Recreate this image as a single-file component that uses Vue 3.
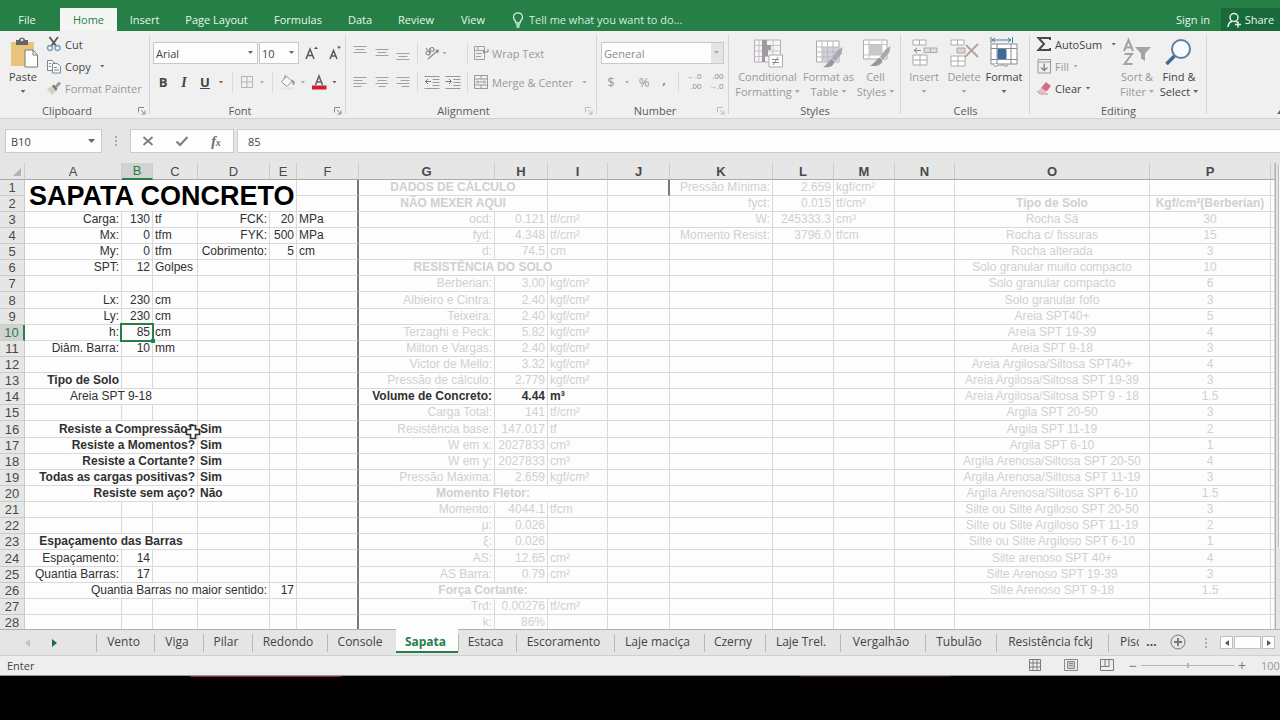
<script setup>
import { ref } from 'vue'

const ribbonTabs = [
  ['File', 54], ['Home', 57], ['Insert', 55], ['Page Layout', 89], ['Formulas', 74],
  ['Data', 50], ['Review', 62], ['View', 52],
]

const columns = [
  ['A', 97], ['B', 31], ['C', 45], ['D', 72], ['E', 27], ['F', 62], ['G', 136], ['H', 53],
  ['I', 60], ['J', 62], ['K', 103], ['L', 61], ['M', 61], ['N', 60], ['O', 195], ['P', 121], ['', 4],
]
const letters = columns.map((c) => c[0])

const cells = {
  A1: ['SAPATA CONCRETO', 5, 'title'],
  A3: ['Carga:'], B3: ['130'], C3: ['tf'], D3: ['FCK:'], E3: ['20'], F3: ['MPa'],
  A4: ['Mx:'], B4: ['0'], C4: ['tfm'], D4: ['FYK:'], E4: ['500'], F4: ['MPa'],
  A5: ['My:'], B5: ['0'], C5: ['tfm'], D5: ['Cobrimento:'], E5: ['5'], F5: ['cm'],
  A6: ['SPT:'], B6: ['12'], C6: ['Golpes'],
  A8: ['Lx:'], B8: ['230'], C8: ['cm'],
  A9: ['Ly:'], B9: ['230'], C9: ['cm'],
  A10: ['h:'], B10: ['85', 1, 'active'], C10: ['cm'],
  A11: ['Diâm. Barra:'], B11: ['10'], C11: ['mm'],
  A13: ['Tipo de Solo', 1, 'bold'],
  A14: ['Areia SPT 9-18', 3, 'mid'],
  A16: ['Resiste a Compressão?', 3, 'bold'], D16: ['Sim', 1, 'bold start'],
  A17: ['Resiste a Momentos?', 3, 'bold'], D17: ['Sim', 1, 'bold start'],
  A18: ['Resiste a Cortante?', 3, 'bold'], D18: ['Sim', 1, 'bold start'],
  A19: ['Todas as cargas positivas?', 3, 'bold'], D19: ['Sim', 1, 'bold start'],
  A20: ['Resiste sem aço?', 3, 'bold'], D20: ['Não', 1, 'bold start'],
  A23: ['Espaçamento das Barras', 3, 'bold mid'],
  A24: ['Espaçamento:'], B24: ['14'],
  A25: ['Quantia Barras:'], B25: ['17'],
  A26: ['Quantia Barras no maior sentido:', 4], E26: ['17'],
  G1: ['DADOS DE CÁLCULO', 2, 'bold mid'],
  G2: ['NÃO MEXER AQUI', 2, 'bold mid'],
  G6: ['RESISTÊNCIA DO SOLO', 3, 'bold mid'],
  G14: ['Volume de Concreto:', 1, 'bold dark'], H14: ['4.44', 1, 'bold dark'], I14: ['m³', 1, 'bold dark'],
  G20: ['Momento Fletor:', 3, 'bold mid'],
  G26: ['Força Cortante:', 3, 'bold mid'],
  O2: ['Tipo de Solo', 1, 'bold'], P2: ['Kgf/cm²(Berberian)', 1, 'bold'],
}

const results = {
  3: ['ocd:', '0.121', 'tf/cm²'], 4: ['fyd:', '4.348', 'tf/cm²'], 5: ['d:', '74.5', 'cm'],
  7: ['Berberian:', '3.00', 'kgf/cm²'], 8: ['Albieiro e Cintra:', '2.40', 'kgf/cm²'],
  9: ['Teixeira:', '2.40', 'kgf/cm²'], 10: ['Terzaghi e Peck:', '5.82', 'kgf/cm²'],
  11: ['Milton e Vargas:', '2.40', 'kgf/cm²'], 12: ['Victor de Mello:', '3.32', 'kgf/cm²'],
  13: ['Pressão de cálculo:', '2.779', 'kgf/cm²'], 15: ['Carga Total:', '141', 'tf/cm²'],
  16: ['Resistência base:', '147.017', 'tf'], 17: ['W em x:', '2027833', 'cm³'],
  18: ['W em y:', '2027833', 'cm³'], 19: ['Pressão Máxima:', '2.659', 'kgf/cm²'],
  21: ['Momento:', '4044.1', 'tfcm'], 22: ['μ:', '0.026', ''], 23: ['ξ:', '0.026', ''],
  24: ['AS:', '12.65', 'cm²'], 25: ['AS Barra:', '0.79', 'cm²'],
  27: ['Trd:', '0.00276', 'tf/cm²'], 28: ['k:', '86%', ''],
}
for (const [r, [g, h, i]] of Object.entries(results)) {
  cells['G' + r] = [g]
  cells['H' + r] = [h]
  cells['I' + r] = [i]
}

const extra = [
  ['Pressão Mínima:', '2.659', 'kgf/cm²'], ['fyct:', '0.015', 'tf/cm²'],
  ['W:', '245333.3', 'cm³'], ['Momento Resist:', '3796.0', 'tfcm'],
]
extra.forEach(([k, l, m], i) => {
  cells['K' + (i + 1)] = [k]
  cells['L' + (i + 1)] = [l]
  cells['M' + (i + 1)] = [m]
})

const soils = [
  ['Rocha Sã', '30'], ['Rocha c/ fissuras', '15'], ['Rocha alterada', '3'],
  ['Solo granular muito compacto', '10'], ['Solo granular compacto', '6'], ['Solo granular fofo', '3'],
  ['Areia SPT40+', '5'], ['Areia SPT 19-39', '4'], ['Areia SPT 9-18', '3'],
  ['Areia Argilosa/Siltosa SPT40+', '4'], ['Areia Argilosa/Siltosa SPT 19-39', '3'],
  ['Areia Argilosa/Siltosa SPT 9 - 18', '1.5'], ['Argila SPT 20-50', '3'], ['Argila SPT 11-19', '2'],
  ['Argila SPT 6-10', '1'], ['Argila Arenosa/Siltosa SPT 20-50', '4'],
  ['Argila Arenosa/Siltosa SPT 11-19', '3'], ['Argila Arenosa/Siltosa SPT 6-10', '1.5'],
  ['Silte ou Silte Argiloso SPT 20-50', '3'], ['Silte ou Silte Argiloso SPT 11-19', '2'],
  ['Silte ou Silte Argiloso SPT 6-10', '1'], ['Silte arenoso SPT 40+', '4'],
  ['Silte Arenoso SPT 19-39', '3'], ['Silte Arenoso SPT 9-18', '1.5'],
]
soils.forEach(([o, p], i) => {
  cells['O' + (i + 3)] = [o]
  cells['P' + (i + 3)] = [p]
})

const rows = Array.from({ length: 28 }, (_, i) => {
  const n = i + 1
  const list = []
  let c = n === 2 ? 5 : 0
  while (c < letters.length) {
    const letter = letters[c]
    const [text = '', span = 1, cls = ''] = cells[letter + n] || []
    list.push({ key: letter + n, text, span, rowspan: cls === 'title' ? 2 : 1, cls: ['col-' + (letter || 'end'), cls] })
    c += span
  }
  return { n, list }
})

const sheets = [
  ['Vento', 58], ['Viga', 49], ['Pilar', 49], ['Redondo', 75], ['Console', 69], ['Sapata', 62],
  ['Estaca', 58], ['Escoramento', 98], ['Laje maciça', 90], ['Czerny', 61], ['Laje Trel.', 75],
  ['Vergalhão', 85], ['Tubulão', 71], ['Resistência fckj', 112],
]

const fontName = ref('Arial')
const fontSize = ref('10')
const numberFormat = ref('General')
const nameBox = ref('B10')
const formula = ref('85')
</script>

<template>
  <div class="excel">
    <header class="top">
      <nav class="tabs" aria-label="Ribbon">
        <button v-for="[t, w] in ribbonTabs" :key="t" class="tab" :class="{ on: t === 'Home', file: t === 'File' }" :style="{ width: w + 'px' }">{{ t }}</button>
      </nav>
      <label class="tell">
        <svg width="12" height="16" viewBox="0 0 12 16" fill="none" stroke="#d7f0df" stroke-width="1.3"><path d="M4 11 C4 8.500 1.500 8 1.500 5.200 A4.500 4.400 0 0 1 10.500 5.200 C10.500 8 8 8.500 8 11 Z M4 13 H8 M4.500 15 H7.500" /></svg>
        <input aria-label="Tell me what you want to do" placeholder="Tell me what you want to do..." />
      </label>
      <button class="sign">Sign in</button>
      <button class="share">
        <svg width="15" height="16" viewBox="0 0 15 16" fill="none" stroke="#dff5e6" stroke-width="1.5"><circle cx="7" cy="5.500" r="4" /><path d="M1 15 C1.300 11.500 3 9.800 5 9.200 M9 9.200 L11 11 M11 9.500 V15.500 M8 12.500 H14" /></svg>
        Share
      </button>
    </header>

    <section class="ribbon">
      <div class="group clipboard">
        <div class="body">
          <button class="big paste">
            <svg width="30" height="32" viewBox="0 0 30 32"><path d="M3 5 H26 V29 H3 Z" fill="#e8c47c" /><path d="M8 3 H11 C11 -0.500 17 -0.500 17 3 H20 V8 H8 Z" fill="#666" /><circle cx="14" cy="3" r="1.300" fill="#eee" /><path d="M17 13 H25 L29.500 18 V30 H17 Z" fill="#fff" stroke="#777" /><path d="M25 13 V18 H29" fill="none" stroke="#777" /></svg>
            <span>Paste</span><i class="caret"></i>
          </button>
          <div class="stack">
            <button class="small">
              <svg width="16" height="16" viewBox="0 0 16 16" fill="none"><path d="M3.500 1 L10.500 10.500 M12 1 L5 10.500" stroke="#555" stroke-width="1.800" /><circle cx="4" cy="12" r="2.500" stroke="#7c9ab8" stroke-width="1.300" /><circle cx="11.500" cy="12" r="2.500" stroke="#7c9ab8" stroke-width="1.300" /></svg>Cut
            </button>
            <button class="small">
              <svg width="16" height="16" viewBox="0 0 16 16" fill="#fafafa" stroke="#7b8792"><path d="M1.500 2.500 H6 L9.500 5.500 V12.500 H1.500 Z" /><path d="M6.500 5.500 H11.500 L14.500 8.500 V15 H6.500 Z M3 5.500 H5 M3 8.500 H5 M8 9.500 H11 M8 12 H13" /></svg>Copy<i class="caret gap"></i>
            </button>
            <button class="small off">
              <svg width="16" height="16" viewBox="0 0 16 16"><path d="M1 9 L6 6 L10 11 L6 15 Z" fill="#d5d0bd" /><path d="M6 6 L8 4.500 L11.500 9 L10 11 Z" fill="#777" /><path d="M9 6 L13 1.500 L15 3.500 L11 8 Z" fill="#999" /></svg>Format Painter
            </button>
          </div>
        </div>
        <footer><span>Clipboard</span><svg class="launch" viewBox="0 0 8 8"><path d="M.500 5.500 V.500 H6 M3 3 L6.500 6.500 M7 3.500 V7 H3.500" /></svg></footer>
      </div>

      <div class="group font">
        <div class="body lines">
          <div class="line row-a">
            <div class="pick"><select v-model="fontName" aria-label="Font"><option>Arial</option></select><i class="caret"></i></div>
            <div class="pick"><select v-model="fontSize" aria-label="Font size"><option>10</option></select><i class="caret"></i></div>
            <button aria-label="Increase font size"><svg width="14" height="16" viewBox="0 0 14 16" fill="none" stroke="#5a5a5a" stroke-width="1.500"><path d="M1 14 L5 4 L9 14 M2.500 10.500 H7.500" /><path d="M9 4 L11 1.500 L13 4 Z" fill="#5a5a5a" stroke="none" /></svg></button>
            <button aria-label="Decrease font size"><svg width="14" height="16" viewBox="0 0 14 16" fill="none" stroke="#5a5a5a" stroke-width="1.500"><path d="M2 14 L5.500 5.500 L9 14 M3 11 H8" /><path d="M9 1.500 L11 4 L13 1.500 Z" fill="#5a5a5a" stroke="none" /></svg></button>
          </div>
          <div class="line row-b">
            <button class="glyph"><b>B</b></button>
            <button class="glyph serif"><b><em>I</em></b></button>
            <button class="glyph"><b><u>U</u></b></button>
            <i class="caret"></i><i class="sep"></i>
            <button aria-label="Borders"><svg width="14" height="14" viewBox="0 0 14 14" fill="none" stroke="#b5b5b5"><path d="M1.500 1.500 H12.500 V12.500 H1.500 Z M7 1.500 V12.500 M1.500 7 H12.500" /></svg></button>
            <i class="caret pale"></i><i class="sep"></i>
            <button aria-label="Fill color"><svg width="16" height="16" viewBox="0 0 16 16" fill="#f7f7f7" stroke="#999"><path d="M6 2 L12 7 L7 12.500 L1.500 8 Z M5 5 V1" /><path d="M12 6 C15 7 14.500 10 13.500 11 Z" fill="#999" /><path d="M1 13.500 H14 V15.500 H1 Z" fill="#e4e4e4" stroke="none" /></svg></button>
            <i class="caret pale"></i>
            <button aria-label="Font color"><svg width="16" height="16" viewBox="0 0 16 16"><path d="M4.500 11 L8 2 L11.500 11 M5.500 8 H10.500" fill="none" stroke="#666" stroke-width="1.600" /><path d="M1 11.500 H15.500 V15.500 H1 Z" fill="#cf1f30" /></svg></button>
            <i class="caret"></i>
          </div>
        </div>
        <footer><span>Font</span><svg class="launch" viewBox="0 0 8 8"><path d="M.500 5.500 V.500 H6 M3 3 L6.500 6.500 M7 3.500 V7 H3.500" /></svg></footer>
      </div>

      <div class="group align">
        <div class="body lines">
          <div class="line row-c">
            <button aria-label="Top align"><svg width="14" height="16" viewBox="0 0 14 16" stroke="#a2a2a2"><path d="M.500 1.500 H13.500 M2.500 4.500 H11.500 M.500 7.500 H13.500" /></svg></button>
            <button aria-label="Middle align"><svg width="14" height="16" viewBox="0 0 14 16" stroke="#a2a2a2"><path d="M.500 4.500 H13.500 M2.500 7.500 H11.500 M.500 10.500 H13.500" /></svg></button>
            <button aria-label="Bottom align"><svg width="14" height="16" viewBox="0 0 14 16" stroke="#a2a2a2"><path d="M.500 8.500 H13.500 M2.500 11.500 H11.500 M.500 14.500 H13.500" /></svg></button>
            <i class="sep"></i>
            <button aria-label="Orientation"><svg width="16" height="16" viewBox="0 0 16 16" fill="none" stroke="#8b8b8b" stroke-width="1.200"><circle cx="4" cy="8" r="2" /><path d="M2 3 L6.500 9 M6 3 V8" /><circle cx="8" cy="4.500" r="2" /><path d="M4 14 L14.500 5 M14.500 5 L11.500 5.500 M14.500 5 L13.500 8" /></svg></button>
            <i class="caret pale lead"></i><i class="sep"></i>
            <button class="small off"><svg width="16" height="16" viewBox="0 0 16 16" fill="none" stroke="#a0a0a0"><path d="M1.500 1.500 H11.500 V14.500 H1.500 Z M1.500 5.500 H11.500 M3 8.500 H9 M3 11.500 H8 M5 1.500 V5" /><path d="M15 4 V7 H10 M12 5 L10 7 L12 9" stroke="#888" /></svg>Wrap Text</button>
          </div>
          <div class="line row-c">
            <button aria-label="Align left"><svg width="14" height="12" viewBox="0 0 14 12" stroke="#a2a2a2"><path d="M.500 1.500 H13.500 M.500 4.500 H9.500 M.500 7.500 H13.500 M.500 10.500 H8.500" /></svg></button>
            <button aria-label="Center"><svg width="14" height="12" viewBox="0 0 14 12" stroke="#a2a2a2"><path d="M.500 1.500 H13.500 M2.500 4.500 H11.500 M.500 7.500 H13.500 M3.500 10.500 H10.500" /></svg></button>
            <button aria-label="Align right"><svg width="14" height="12" viewBox="0 0 14 12" stroke="#a2a2a2"><path d="M.500 1.500 H13.500 M4.500 4.500 H13.500 M.500 7.500 H13.500 M5.500 10.500 H13.500" /></svg></button>
            <i class="sep"></i>
            <button aria-label="Decrease indent"><svg width="16" height="14" viewBox="0 0 16 14" fill="none" stroke="#999"><path d="M.500 1.500 H15.500 M8.500 4.500 H15.500 M8.500 7.500 H15.500 M8.500 10.500 H15.500 M.500 13.500 H15.500" /><path d="M7 6.500 H1.500 M4 4 L1.500 6.500 L4 9" stroke="#777" /></svg></button>
            <button aria-label="Increase indent"><svg width="16" height="14" viewBox="0 0 16 14" fill="none" stroke="#999"><path d="M.500 1.500 H15.500 M8.500 4.500 H15.500 M8.500 7.500 H15.500 M8.500 10.500 H15.500 M.500 13.500 H15.500" /><path d="M.500 6.500 H6 M4 4 L6.500 6.500 L4 9" stroke="#777" /></svg></button>
            <i class="sep"></i>
            <button class="small off"><svg width="16" height="16" viewBox="0 0 16 16" fill="none" stroke="#999"><path d="M1.500 1.500 H14.500 V14.500 H1.500 Z M1.500 5 H14.500 M1.500 11 H14.500 M8 1.500 V5 M8 11 V14.500 M3.500 8 H12.500 M5 6.500 L3.500 8 L5 9.500 M11 6.500 L12.500 8 L11 9.500" /></svg>Merge &amp; Center<i class="caret pale gap"></i></button>
          </div>
        </div>
        <footer><span>Alignment</span><svg class="launch pale" viewBox="0 0 8 8"><path d="M.500 5.500 V.500 H6 M3 3 L6.500 6.500 M7 3.500 V7 H3.500" /></svg></footer>
      </div>

      <div class="group number">
        <div class="body lines">
          <div class="line row-d"><div class="pick dim"><select v-model="numberFormat" aria-label="Number format"><option>General</option></select><i class="caret pale"></i></div></div>
          <div class="line row-e">
            <button class="glyph off">$</button><i class="caret pale"></i>
            <button class="glyph off">%</button><button class="glyph comma"><b>,</b></button>
            <i class="sep"></i>
            <button class="dec" aria-label="Increase decimal"><span>←.0</span><span>.00</span></button>
            <button class="dec" aria-label="Decrease decimal"><span>.00</span><span>→.0</span></button>
          </div>
        </div>
        <footer><span>Number</span><svg class="launch pale" viewBox="0 0 8 8"><path d="M.500 5.500 V.500 H6 M3 3 L6.500 6.500 M7 3.500 V7 H3.500" /></svg></footer>
      </div>

      <div class="group styles">
        <div class="body">
          <button class="big off">
            <svg width="32" height="32" viewBox="0 0 32 32"><path d="M2.500 3 H28.500 V25 H2.500 Z" fill="#f7f4f7" stroke="#b4b0b4" /><path d="M2.500 8.500 H28.500 M2.500 14 H28.500 M2.500 19.500 H28.500 M7 3 V25 M21 3 V25" stroke="#c6c2c6" /><path d="M10 3 H15 V8 H19 V13 H16 V19 H13 V25 H10 Z" fill="#9e9aa2" /><path d="M17 18 H30.500 V30 H17 Z" fill="#fff" stroke="#aaa" /><path d="M20 22.500 H27 M20 25.500 H27 M26 20 L21 28" stroke="#888" /></svg>
            <span>Conditional</span><span>Formatting<i class="caret pale"></i></span>
          </button>
          <button class="big off">
            <svg width="30" height="32" viewBox="0 0 30 32"><path d="M2.500 4 H25 V25 H2.500 Z" fill="#fff" stroke="#aaa" /><path d="M8 10 H25 V25 H8 Z" fill="#d2d0dc" /><path d="M2.500 10 H25 M2.500 15 H25 M2.500 20 H25 M8 4 V25 M13.500 4 V25 M19 4 V25" stroke="#bbb" /><path d="M28.500 10 L27.500 17 L21 24 L18 21 L23 14 Z" fill="#a8a8ae" /><path d="M17.500 22 L20.500 25 C19 30 14 31 9 30 C13 28.500 14 24 17.500 22 Z" fill="#98989f" /></svg>
            <span>Format as</span><span>Table<i class="caret pale"></i></span>
          </button>
          <button class="big off">
            <svg width="30" height="32" viewBox="0 0 30 32"><path d="M2.500 3 H26 V22 H2.500 Z" fill="#fff" stroke="#aaa" /><path d="M8 7 H21 V18 H8 Z" fill="#c7c7cc" /><path d="M2.500 7.500 H26 M2.500 18 H26 M8 3 V22 M21 3 V22" stroke="#c4c4c4" /><path d="M29.500 9 L28.500 15 L22 23 L19 20 L24 13 Z" fill="#a8a8ae" /><path d="M18.500 20.500 L21.500 24 C20 28.500 15 30 9 28.500 C13 27 15 22.500 18.500 20.500 Z" fill="#98989f" /></svg>
            <span>Cell</span><span>Styles<i class="caret pale"></i></span>
          </button>
        </div>
        <footer><span>Styles</span></footer>
      </div>

      <div class="group cells">
        <div class="body">
          <button class="big off">
            <svg width="28" height="32" viewBox="0 0 28 32" fill="#fff" stroke="#aaa"><path d="M3 3 H16 V8 H3 Z M9.500 3 V8 M3 18 H17 V28 H3 Z M10 18 V28 M3 23 H17" /><path d="M14 11 H27 V15.500 H14 Z M20.500 11 V15.500" fill="#ddd" /><path d="M11 13.500 H4 M7 11 L4 13.500 L7 16" fill="none" stroke="#888" /></svg>
            <span>Insert</span><i class="caret pale"></i>
          </button>
          <button class="big off">
            <svg width="30" height="32" viewBox="0 0 30 32" fill="#fff" stroke="#aaa"><path d="M2 3 H15 V8 H2 Z M8.500 3 V8 M2 19 H16 V29 H2 Z M9 19 V29 M2 24 H16" /><path d="M8 11 H16 V16 H8 Z" fill="#d5d5dc" /><path d="M17 8 L29 20 M29 7 L16 20" fill="none" stroke="#b5a49a" stroke-width="1.800" /></svg>
            <span>Delete</span><i class="caret pale"></i>
          </button>
          <button class="big">
            <svg width="30" height="32" viewBox="0 0 30 32" fill="#fff" stroke="#858c8c"><path d="M2 7 H28 V27 H2 Z M2 11.500 H28 M2 22.500 H28 M8 7 V27 M22 7 V27" /><path d="M9 12.500 H17 V21.500 H9 Z" fill="#3a6c99" stroke="#3a6c99" /><path d="M3 3 H22 M6 1 L3 3 L6 5 M19 1 L22 3 L19 5 M2 0 V6 M23.500 0 V6" fill="none" stroke="#4a7a96" /><path d="M4 27 Q6 31 9 28 H15 Q17 31 19 28" stroke="#858c8c" /></svg>
            <span>Format</span><i class="caret"></i>
          </button>
        </div>
        <footer><span>Cells</span></footer>
      </div>

      <div class="group editing">
        <div class="body">
          <div class="stack">
            <button class="small"><svg width="16" height="16" viewBox="0 0 16 16" fill="none" stroke="#4a4a4a" stroke-width="2"><path d="M14 4 V2 H2.500 L8 8 L2.500 14 H14 V12" /></svg>AutoSum<i class="caret gap"></i></button>
            <button class="small off"><svg width="16" height="16" viewBox="0 0 16 16" fill="none" stroke="#999"><path d="M2 1.500 H14.500 V15 H2 Z M2 4 H14.500" /><path d="M8.200 5.500 V12 M5 9.500 L8.200 12.500 L11.500 9.500" stroke="#7d8791" stroke-width="1.400" /></svg>Fill<i class="caret pale near"></i></button>
            <button class="small"><svg width="16" height="16" viewBox="0 0 16 16"><path d="M5 8 L10 2 L15 6 L10.500 11.500 Z" fill="#cf6f88" /><path d="M5 8 L10.500 11.500 L8.500 13.500 L3.500 13 L2 11 Z" fill="#e8bcc8" /><path d="M1 11 L4 14 H12" fill="none" stroke="#c0909c" /></svg>Clear<i class="caret near"></i></button>
          </div>
          <button class="big off">
            <svg width="30" height="32" viewBox="0 0 30 32" fill="none" stroke="#a3a3a3" stroke-width="2"><path d="M2 14 L6.500 3 L11 14 M3.500 10.500 H9.500 M2.500 17 H10 L2.500 27 H10.500" /><path d="M13 10 H29 L23 16.500 V24 L19 21.500 V16.500 Z" fill="#a3a3a3" stroke="none" /></svg>
            <span>Sort &amp;</span><span>Filter<i class="caret pale"></i></span>
          </button>
          <button class="big">
            <svg width="30" height="32" viewBox="0 0 30 32"><circle cx="17" cy="12" r="9" fill="#f8fcff" stroke="#5a7fa0" stroke-width="2" /><path d="M10.500 19 L2.500 27" stroke="#3f6a92" stroke-width="3.500" /></svg>
            <span>Find &amp;</span><span>Select<i class="caret"></i></span>
          </button>
        </div>
        <footer><span>Editing</span></footer>
      </div>
      <button class="collapse" aria-label="Collapse the ribbon"><svg width="3" height="4" viewBox="0 0 3 4"><path d="M0 4 L3 0 V4 Z" fill="#666" /></svg></button>
    </section>

    <section class="formula-bar">
      <div class="name-box"><input v-model="nameBox" aria-label="Name box" /><i class="caret wide"></i></div>
      <span class="dots"><i></i><i></i><i></i></span>
      <div class="fx-box">
        <button aria-label="Cancel"><svg width="12" height="12" viewBox="0 0 12 12" stroke="#7b7b7b" stroke-width="1.700"><path d="M1.500 2 L10.500 10 M10.500 2 L1.500 10" /></svg></button>
        <button aria-label="Enter"><svg width="14" height="12" viewBox="0 0 14 12" fill="none" stroke="#7b7b7b" stroke-width="2"><path d="M1.500 6.500 L5 10 L12.500 2" /></svg></button>
        <button class="fx" aria-label="Insert function"><em>f</em><em class="x">x</em></button>
      </div>
      <input v-model="formula" class="formula" aria-label="Formula" />
    </section>

    <main class="sheet">
      <div class="grid">
        <table>
          <colgroup><col class="rowcol" /><col v-for="[l, w] in columns" :key="l" :style="{ width: w + 'px' }" /></colgroup>
          <thead>
            <tr>
              <th class="corner"><svg width="8" height="8" viewBox="0 0 8 8"><path d="M8 0 V8 H0 Z" fill="#b3b3b3" /></svg></th>
              <th v-for="(l, i) in letters" :key="l" :class="{ sel: l === 'B', strong: i > 5 }">{{ l }}</th>
            </tr>
          </thead>
          <tbody>
            <tr v-for="r in rows" :key="r.n">
              <th :class="{ sel: r.n === 10 }">{{ r.n }}</th>
              <td v-for="c in r.list" :key="c.key" :class="[c.cls, { mark: c.key === 'J1' }]" :colspan="c.span" :rowspan="c.rowspan">{{ c.text }}</td>
            </tr>
          </tbody>
        </table>
        <svg class="cursor" width="16" height="16" viewBox="0 0 16 16"><path d="M5.500 1.500 H10.500 V5.500 H14.500 V10.500 H10.500 V14.500 H5.500 V10.500 H1.500 V5.500 H5.500 Z" fill="#fff" stroke="#333" stroke-width="1.700" /></svg>
      </div>
      <div class="vscroll"><i></i></div>
    </main>

    <nav class="sheets" aria-label="Sheets">
      <div class="arrows">
        <button aria-label="Previous sheets"><svg width="5" height="8" viewBox="0 0 5 8"><path d="M5 0 V8 L0 4 Z" fill="#c2c2c2" /></svg></button>
        <button aria-label="Next sheets"><svg width="5" height="8" viewBox="0 0 5 8"><path d="M0 0 V8 L5 4 Z" fill="#1d6b40" /></svg></button>
      </div>
      <button v-for="[s, w] in sheets" :key="s" class="sheet-tab" :class="{ on: s === 'Sapata' }" :style="{ width: w + 'px' }">{{ s }}</button>
      <button class="cut">Pisc</button>
      <button class="more" aria-label="More sheets">...</button>
      <button class="add" aria-label="New sheet"><svg width="16" height="16" viewBox="0 0 16 16" fill="none" stroke="#777"><circle cx="8" cy="8" r="7" /><path d="M8 4 V12 M4 8 H12" stroke-width="1.800" /></svg></button>
      <span class="dots"><i></i><i></i><i></i></span>
      <div class="hscroll">
        <button aria-label="Scroll left"><svg width="4" height="6" viewBox="0 0 4 6"><path d="M4 0 V6 L0 3 Z" fill="#555" /></svg></button>
        <i></i>
        <button aria-label="Scroll right"><svg width="4" height="6" viewBox="0 0 4 6"><path d="M0 0 V6 L4 3 Z" fill="#555" /></svg></button>
      </div>
    </nav>

    <div class="status">
      <span class="mode">Enter</span>
      <button aria-label="Normal view"><svg width="14" height="14" viewBox="0 0 14 14" fill="none" stroke="#7a7a7a"><path d="M1.500 1.500 H12.500 V12.500 H1.500 Z M5 1.500 V12.500 M9 1.500 V12.500 M1.500 5 H12.500 M1.500 9 H12.500" /></svg></button>
      <button aria-label="Page layout view"><svg width="14" height="14" viewBox="0 0 14 14" fill="none" stroke="#8a8a8a"><path d="M.500 1.500 H13.500 V12.500 H.500 Z" /><path d="M3.500 3.500 H10.500 V10.500 H3.500 Z M5 5.500 H9 M5 7.500 H9" fill="#ccc" /></svg></button>
      <button aria-label="Page break preview"><svg width="14" height="14" viewBox="0 0 14 14" fill="none" stroke="#7a7a7a"><path d="M.500 1.500 H13.500 V12.500 H.500 Z M5 1.500 V8 M9 1.500 V8 M.500 8.500 H9.500" /></svg></button>
      <button class="zoom-step">−</button>
      <input class="zoom" type="range" min="0" max="100" value="50" aria-label="Zoom" />
      <button class="zoom-step">+</button>
      <span class="percent">100%</span>
    </div>
    <div class="player"><i class="red"></i><i class="dimred"></i></div>
  </div>
</template>

<style>
body {
  margin: 0;
  background: #000;
}
</style>

<style scoped>
.excel {
  display: flex;
  flex-direction: column;
  height: 100vh;
  min-width: 1280px;
  overflow: hidden;
  font: 11px/15px "Open Sans", "Noto Sans", sans-serif;
  color: #444;
  background: #e5e5e5;
}
.excel * {
  box-sizing: border-box;
}
button,
input,
select {
  margin: 0;
  padding: 0;
  border: 0;
  outline: 0;
  background: none;
  font: inherit;
  color: inherit;
  appearance: none;
}
button {
  display: flex;
  align-items: center;
  justify-content: center;
  white-space: nowrap;
}
svg {
  flex: none;
  display: block;
}
.off {
  color: #999;
}
.caret {
  flex: none;
  width: 5px;
  height: 3px;
  background: #666;
  clip-path: polygon(0 0, 100% 0, 50% 100%);
}
.caret.pale {
  background: #aaa;
}
.caret.wide {
  width: 7px;
  height: 4px;
}

/* title strip */
.top {
  display: flex;
  align-items: flex-end;
  flex: none;
  height: 31px;
  background: #257f47;
  color: #e6f7eb;
}
.tabs {
  display: flex;
  padding-left: 6px;
}
.tab {
  height: 23px;
}
.tab.file {
  padding-right: 12px;
}
.tab.on {
  background: #f4f6f4;
  color: #257f47;
}
.tell {
  display: flex;
  align-items: center;
  gap: 5px;
  flex: 1;
  height: 23px;
  padding-left: 13px;
}
.tell input {
  width: 200px;
}
.tell input::placeholder {
  color: #d3eedb;
  opacity: 1;
}
.sign {
  width: 56px;
  height: 23px;
}
.share {
  width: 59px;
  height: 23px;
  gap: 3px;
  background: #19693a;
}

/* ribbon */
.ribbon {
  display: flex;
  flex: none;
  height: 88px;
  background: #f0f0f0;
  border-bottom: 1px solid #d2d2d2;
}
.group {
  display: flex;
  flex-direction: column;
  position: relative;
  flex: none;
}
.group::after {
  content: "";
  position: absolute;
  right: 0;
  top: 4px;
  bottom: 4px;
  width: 1px;
  background: #d4d4d4;
}
.group footer {
  display: flex;
  align-items: center;
  justify-content: center;
  position: relative;
  height: 16px;
  color: #5a5a5a;
}
.launch {
  position: absolute;
  right: 4px;
  top: 5px;
  width: 8px;
  height: 8px;
  fill: none;
  stroke: #888;
}
.launch.pale {
  stroke: #bbb;
}
.collapse {
  align-self: flex-end;
  margin-left: auto;
  padding-bottom: 4px;
}
.body {
  display: flex;
  height: 72px;
}
.body.lines {
  flex-direction: column;
  padding-top: 8px;
  gap: 1px;
}
.line {
  display: grid;
  align-items: center;
  justify-items: center;
  height: 28px;
}
.stack {
  display: flex;
  flex-direction: column;
  padding-top: 2px;
}
.small {
  justify-content: flex-start;
  gap: 3px;
  height: 22px;
}
.small .gap {
  margin-left: 6px;
}
.big {
  flex-direction: column;
  justify-content: flex-start;
  padding-top: 6px;
}
.big span {
  display: flex;
  align-items: center;
  gap: 3px;
}
.big > .caret {
  margin-top: 6px;
}
.sep {
  width: 1px;
  height: 20px;
  background: #d8d8d8;
}
.clipboard { width: 150px; }
.clipboard footer { padding-right: 16px; }
.paste { width: 46px; }
.font { width: 196px; }
.font footer { padding-right: 16px; }
.align { width: 251px; }
.align footer { padding-right: 16px; }
.number { width: 132px; }
.number footer { padding-right: 16px; }
.styles { width: 172px; }
.cells { width: 129px; }
.editing { width: 177px; }
.row-a {
  grid-template-columns: 105px 40px 24px 20px;
  column-gap: 1px;
  padding-left: 3px;
}
.row-b {
  grid-template-columns: 20px 22px 20px 12px 10px 19px 12px 9px 21px 10px 21px 11px;
  padding-left: 3px;
}
.row-c {
  grid-template-columns: 22px 21px 21px 8px 21px 21px 8px auto;
  padding-left: 3px;
}
.row-c .small {
  justify-self: start;
  padding-left: 2px;
}
.row-c .lead {
  justify-self: start;
}
.row-d {
  grid-template-columns: 123px;
  padding-left: 4px;
}
.row-e {
  grid-template-columns: 22px 10px 24px 16px 12px 20px 24px;
  padding-left: 3px;
}
.pick {
  position: relative;
  width: 100%;
  height: 22px;
  background: #fdfdfd;
  border: 1px solid #c9c9c9;
}
.pick select {
  width: 100%;
  height: 20px;
  padding-left: 2px;
}
.pick .caret {
  position: absolute;
  right: 4px;
  top: 8px;
}
.pick.dim {
  color: #8a8a8a;
}
.pick.dim::after {
  content: "";
  position: absolute;
  right: 0;
  top: 0;
  bottom: 0;
  width: 12px;
  background: #e4e4e4;
}
.pick.dim .caret {
  z-index: 1;
}
.glyph {
  height: 20px;
  font-size: 13px;
}
.glyph.comma {
  align-items: flex-start;
  color: #888;
}
.glyph.serif {
  font-family: "Liberation Serif", serif;
  font-size: 14px;
}
.dec {
  flex-direction: column;
  align-items: flex-end;
  color: #8c8c8c;
  font: 8px/10px "Liberation Sans", Arial, sans-serif;
}
.styles .big:nth-child(1) { width: 77px; }
.styles .big:nth-child(2) { width: 45px; }
.styles .big:nth-child(3) { width: 49px; }
.cells .body { padding-left: 3px; }
.cells .big { width: 40px; }
.editing .stack { width: 86px; padding-left: 6px; }
.editing .big { width: 42px; }
.editing .small .near { margin-left: 1px; }

/* formula bar */
.formula-bar {
  display: flex;
  align-items: center;
  flex: none;
  height: 44px;
  padding-left: 5px;
  background: #e5e5e5;
}
.name-box,
.fx-box,
.formula {
  height: 24px;
  background: #fdfdfd;
  border: 1px solid #cbcbcb;
}
.name-box {
  display: flex;
  align-items: center;
  width: 97px;
  padding: 0 6px 0 5px;
}
.name-box input {
  flex: 1;
  min-width: 0;
}
.dots {
  display: flex;
  flex-direction: column;
  align-items: center;
  gap: 2px;
  width: 28px;
}
.dots i {
  width: 2px;
  height: 2px;
  background: #aaa;
}
.fx-box {
  display: grid;
  grid-template-columns: repeat(3, 1fr);
  width: 104px;
}
.fx {
  font-family: "Liberation Serif", serif;
  font-weight: 700;
  font-size: 14px;
  color: #6b6b6b;
}
.fx .x {
  padding-top: 3px;
  font-size: 10px;
}
.formula {
  flex: 1;
  margin-left: 3px;
  padding-left: 10px;
  border-right: 0;
}

/* worksheet */
.sheet {
  display: flex;
  flex: 1;
  min-height: 0;
}
.grid {
  position: relative;
  flex: 1;
  overflow: hidden;
  background: #fdfdfd;
}
table {
  width: 100%;
  table-layout: fixed;
  border-collapse: separate;
  border-spacing: 0;
  font: 12px/15px "Liberation Sans", Arial, sans-serif;
  color: #303030;
}
.rowcol {
  width: 25px;
}
th,
td {
  height: 16px;
  padding: 0 2px;
  border-right: 1px solid #d9d9d9;
  border-bottom: 1px solid #d9d9d9;
  white-space: nowrap;
}
tbody tr:nth-child(8n) > * {
  height: 17px;
}
th {
  padding: 0;
  background: #e6e6e6;
  font-size: 13px;
  font-weight: 400;
  color: #4a4a4a;
  border-color: #cbcbcb;
}
thead th {
  border-bottom-color: #a8a8a8;
}
th.strong {
  font-weight: 700;
}
th.sel {
  background: #d2d2d2;
  color: #257f47;
}
thead th.sel {
  border-bottom: 2px solid #257f47;
}
tbody th.sel {
  border-right: 2px solid #257f47;
}
.corner svg {
  margin: 2px 3px 0 auto;
}
.col-A, .col-B, .col-D, .col-E, .col-G, .col-H, .col-K, .col-L {
  text-align: right;
}
.col-O, .col-P, .mid {
  text-align: center;
}
.start {
  text-align: left;
}
.col-G, .col-H, .col-I, .col-K, .col-L, .col-M, .col-O, .col-P {
  color: #d0d0d0;
}
.dark {
  color: #303030;
}
.bold {
  font-weight: 700;
}
.col-F {
  border-right: 2px solid #777;
}
.mark {
  border-right: 2px solid #777;
}
.title {
  padding: 0 0 0 4px;
  text-align: left;
  font-size: 27px;
  line-height: 30px;
  font-weight: 700;
  color: #000;
}
.active {
  position: relative;
}
.active::before {
  content: "";
  position: absolute;
  inset: -2px;
  border: 2px solid #257f47;
}
.active::after {
  content: "";
  position: absolute;
  right: -3px;
  bottom: -3px;
  width: 4px;
  height: 4px;
  background: #257f47;
}
.cursor {
  position: absolute;
  left: 185px;
  top: 261px;
}
.vscroll {
  display: flex;
  justify-content: flex-end;
  width: 5px;
  border-left: 1px solid #b0b0b0;
  background: #e5e5e5;
}
.vscroll i {
  width: 2px;
  height: 82%;
  margin-top: 2px;
  background: #fafafa;
  border-left: 1px solid #b8b8b8;
}

/* sheet tabs */
.sheets {
  display: flex;
  flex: none;
  height: 27px;
  font-size: 12px;
  border-top: 1px solid #b0b0b0;
  border-bottom: 1px solid #cfcfcf;
}
.arrows {
  display: grid;
  grid-template-columns: 27px 27px;
  padding-left: 14px;
  width: 96px;
}
.sheet-tab {
  flex: none;
  height: 23px;
  padding-right: 3px;
  position: relative;
}
.sheet-tab::before,
.cut::before {
  content: "";
  position: absolute;
  left: 0;
  top: 4px;
  bottom: 1px;
  width: 1px;
  background: #b8b8b8;
}
.sheet-tab.on {
  margin-top: -1px;
  height: 24px;
  padding-top: 2px;
  background: #fdfdfd;
  border-bottom: 2px solid #257f47;
  color: #257f47;
  font-weight: 700;
}
.sheet-tab.on::before {
  display: none;
}
.cut {
  position: relative;
  width: 31px;
  height: 23px;
  padding-left: 12px;
  overflow: hidden;
  justify-content: flex-start;
}
.more {
  width: 25px;
  height: 23px;
  font-weight: 700;
}
.add {
  width: 28px;
  height: 24px;
}
.sheets .dots {
  justify-content: center;
}
.hscroll {
  display: flex;
  align-items: center;
  flex: 1;
  gap: 1px;
}
.hscroll button,
.hscroll i {
  width: 13px;
  height: 13px;
  background: #fdfdfd;
  border: 1px solid #c0c0c0;
}
.hscroll i {
  flex: 1;
}
.hscroll button:last-child {
  margin-right: 5px;
}

/* status bar */
.status {
  display: flex;
  align-items: center;
  flex: none;
  height: 20px;
  padding-bottom: 1px;
  background: #eee;
  border-bottom: 1px solid #999;
}
.mode {
  flex: 1;
  padding-left: 7px;
}
.status button {
  width: 36px;
}
.status .zoom-step {
  width: 16px;
  font-size: 14px;
  color: #777;
}
.zoom {
  width: 93px;
  height: 12px;
}
.zoom::-webkit-slider-runnable-track {
  height: 1px;
  background: #b5b5b5;
}
.zoom::-webkit-slider-thumb {
  appearance: none;
  width: 2px;
  height: 5px;
  margin-top: -2px;
  background: #b5b5b5;
}
.percent {
  width: 30px;
  padding-left: 11px;
  overflow: hidden;
  color: #999;
}
.player {
  display: flex;
  flex: none;
  height: 44px;
  padding-left: 190px;
  gap: 459px;
  background: #000;
}
.player i {
  width: 151px;
  height: 1px;
  background: #9c1f35;
}
.player .dimred {
  background: #3a1218;
}
</style>
